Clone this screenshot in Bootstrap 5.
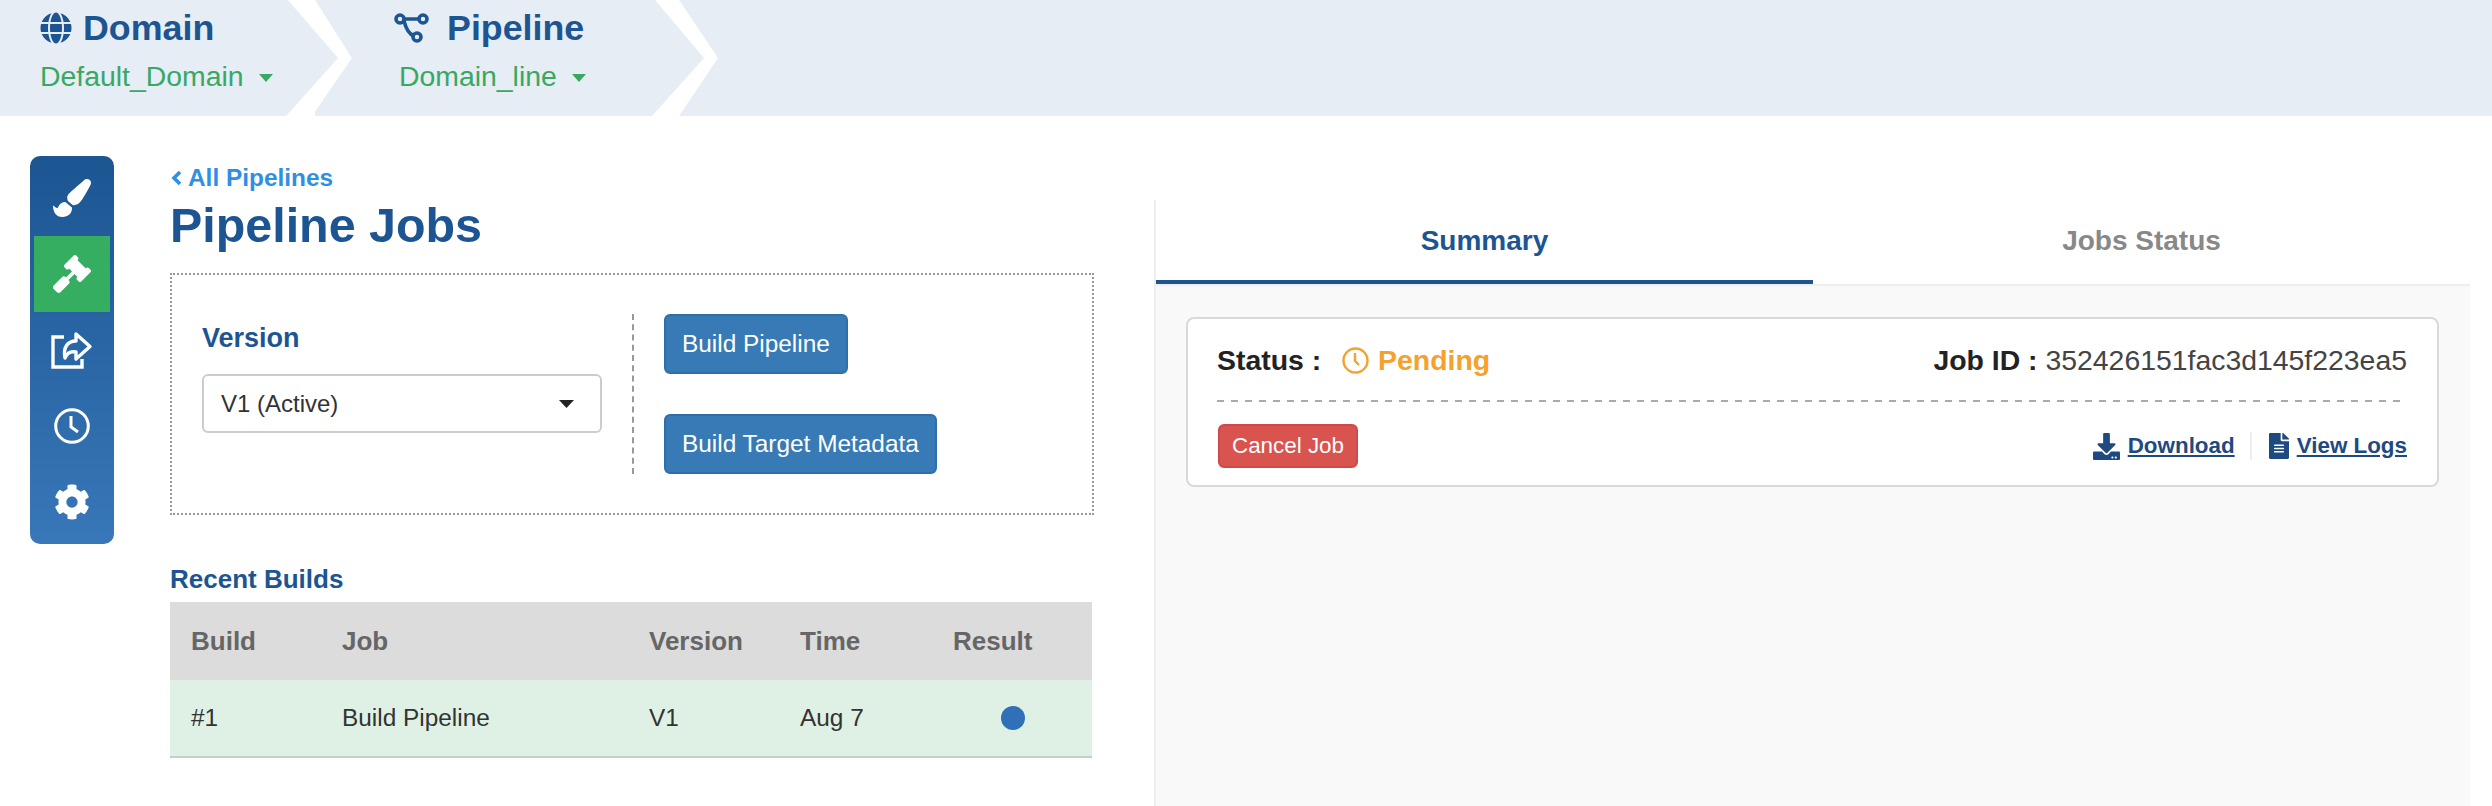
<!DOCTYPE html>
<html lang="en">
<head>
    <meta charset="UTF-8">
    <meta name="viewport" content="width=device-width, initial-scale=1.0">
    <title>Pipeline Jobs</title>
    <link rel="stylesheet" href="https://cdn.jsdelivr.net/npm/bootstrap@5.3.0/dist/css/bootstrap.min.css">
    <style>
    body {
        font-family: "Liberation Sans", Arial, sans-serif;
        font-size: 26px;
        color: #222;
        background: #fff;
        overflow: hidden;
    }

    /* top breadcrumb bar */
    .crumb-bar { height: 116px; }
    .crumb {
        background: #e6edf5;
        height: 116px;
        padding-top: 8px;
    }
    .crumb-one {
        width: 338px;
        padding-left: 40px;
        clip-path: polygon(0 0, 288px 0, 338px 58px, 286px 116px, 0 116px);
    }
    .crumb-two {
        width: 389px;
        margin-left: -23px;
        padding-left: 78px;
        clip-path: polygon(0 0, 340px 0, 389px 58px, 337px 116px, -3px 116px, 37px 58px);
    }
    .crumb-three {
        margin-left: -25px;
        clip-path: polygon(0 0, 100% 0, 100% 100%, 0 100%, 39px 58px);
    }
    .crumb-title {
        color: #1c5592;
        font-size: 35.800px;
        font-weight: 700;
        line-height: 40px;
    }
    .crumb-sub {
        display: inline-block;
        color: #38a863;
        font-size: 28.400px;
        line-height: 36px;
        margin-top: 10px;
        text-decoration: none;
    }
    .crumb-two .crumb-sub { margin-left: 6px; }
    .crumb-sub.dropdown-toggle::after {
        margin-left: 15px;
        vertical-align: 4px;
        border-top: 8px solid;
        border-left: 7px solid transparent;
        border-right: 7px solid transparent;
        border-bottom: 0;
    }
    .globe-icon { margin-right: 11px; }
    .route-icon { margin-right: 17px; }

    /* icon rail */
    .side-rail {
        width: 84px;
        height: 388px;
        margin: 40px 56px 0 30px;
        padding: 4px;
        border-radius: 10px;
        background: linear-gradient(180deg, #1c5592, #3877b8);
    }
    .rail-item {
        width: 76px;
        height: 76px;
    }
    .rail-item.active { background: #36ae62; }

    /* left column */
    .jobs-col { width: 924px; }
    .back-link {
        display: flex;
        align-items: center;
        gap: 6px;
        margin-top: 47px;
        padding-left: 1px;
        color: #2f8fe3;
        font-size: 24.400px;
        font-weight: 700;
        line-height: 30px;
        text-decoration: none;
    }
    .page-title {
        color: #1c5592;
        font-size: 48.400px;
        font-weight: 700;
        line-height: 56px;
        margin: 4px 0 20px;
    }
    .build-box {
        height: 242px;
        border: 2px dotted #999;
        padding: 39px 0 0 30px;
    }
    .version-col {
        width: 400px;
        padding-top: 6px;
    }
    .version-label {
        color: #1c5592;
        font-size: 27px;
        font-weight: 700;
        line-height: 36px;
        margin-bottom: 18px;
    }
    .version-select {
        height: 59px;
        padding: 0 50px 0 17px;
        font-size: 24px;
        color: #333;
        border: 2px solid #ccc;
        border-radius: 6px;
        background-image: url("data:image/svg+xml,%3Csvg xmlns='http://www.w3.org/2000/svg' viewBox='0 0 15 8'%3E%3Cpath fill='%23222' d='M0 0h15L7.500 8z'/%3E%3C/svg%3E");
        background-size: 15px 8px;
        background-position: right 26px center;
    }
    .build-actions {
        height: 160px;
        margin-left: 30px;
        padding-left: 30px;
        border-left: 2px dashed #999;
        gap: 40px;
    }
    .btn-build {
        height: 60px;
        padding: 0 16px;
        font-size: 24.400px;
        line-height: 56px;
        color: #fff;
        background: #377ab5;
        border: 2px solid #2f6fa8;
        border-radius: 6px;
    }
    .recent-title {
        color: #1c5592;
        font-size: 26px;
        font-weight: 700;
        line-height: 30px;
        margin: 49px 0 8px;
    }
    .builds-table {
        width: 922px;
        table-layout: fixed;
        margin: 0;
        box-shadow: 0 2px 0 #c4cfc8;
    }
    .builds-table th {
        height: 78px;
        padding: 0 0 0 21px;
        vertical-align: middle;
        font-size: 26px;
        color: #666;
        background: #dcdcdc;
        border: 0;
    }
    .builds-table td {
        height: 76px;
        padding: 0 0 0 21px;
        vertical-align: middle;
        font-size: 24.400px;
        color: #333;
        background: #dff1e5;
        border: 0;
    }
    .result-dot {
        display: block;
        width: 24px;
        height: 24px;
        margin: 0 auto;
        border-radius: 50%;
        background: #2f70b6;
        transform: translateX(-10px);
    }

    /* right panel */
    .result-panel {
        width: 1316px;
        margin: 84px 0 0 60px;
        height: 606px;
        border-left: 2px solid #eee;
        background: #f9f9f9;
    }
    .tab-row {
        height: 86px;
        background: #fff;
        border-bottom: 2px solid #eee;
    }
    .tab-row .nav-link {
        height: 84px;
        padding: 0;
        font-size: 28px;
        font-weight: 700;
        line-height: 82px;
        color: #888;
        border-bottom: 4px solid transparent;
    }
    .tab-row .nav-link.active {
        color: #1c5592;
        border-bottom-color: #1c5592;
    }
    .job-card {
        height: 170px;
        margin: 31px 31px 0 30px;
        padding: 21px 30px 0 29px;
        background: #fff;
        border: 2px solid #d9d9d9;
        border-radius: 8px;
    }
    .job-head {
        height: 40px;
        font-size: 28.400px;
        line-height: 40px;
    }
    .job-head b { color: #222; }
    .job-id { color: #444; }
    .pending {
        color: #f5a12f;
        font-weight: 700;
    }
    .status-clock { margin: 0 9px 0 21px; }
    .dash-line {
        height: 2px;
        margin: 20px 7px 22px 0;
        background: repeating-linear-gradient(90deg, #aaa 0 7px, transparent 7px 14px);
    }
    .btn-cancel {
        height: 44px;
        width: 140px;
        margin-left: 1px;
        padding: 0;
        font-size: 22.400px;
        line-height: 40px;
        color: #fff;
        background: #d9534f;
        border: 2px solid #d0494a;
        border-radius: 6px;
    }
    .job-link {
        color: #1f4a80;
        font-size: 22.400px;
        font-weight: 700;
        line-height: 30px;
    }
    .link-rule {
        width: 2px;
        height: 28px;
        margin: 0 17px 0 15px;
        background: #eee;
    }
    </style>
</head>
<body>
    <div class="crumb-bar d-flex">
        <div class="crumb crumb-one">
            <div class="crumb-title d-flex align-items-center">
                <svg width="32" height="32" viewBox="0 0 496 512" fill="#1c5592" class="globe-icon"><path d="M336.500 160C322 70.700 287.800 8 248 8s-74 62.700-88.500 152h177zM152 256c0 22.200 1.200 43.500 3.300 64h185.300c2.100-20.500 3.300-41.800 3.300-64s-1.200-43.500-3.300-64H155.300c-2.100 20.500-3.300 41.800-3.300 64zm324.700-96c-28.600-67.900-86.500-120.400-158-141.600 24.400 33.800 41.200 84.700 50 141.600h108zM177.200 18.400C105.800 39.600 47.800 92.100 19.300 160h108c8.700-56.900 25.500-107.800 49.900-141.600zM487.400 192H372.700c2.100 21 3.300 42.500 3.300 64s-1.200 43-3.300 64h114.600c5.500-20.500 8.600-41.800 8.600-64s-3.100-43.500-8.500-64zM120 256c0-21.500 1.200-43 3.300-64H8.600C3.200 212.500 0 233.800 0 256s3.200 43.500 8.600 64h114.600c-2-21-3.200-42.500-3.200-64zm39.500 96c14.500 89.300 48.700 152 88.500 152s74-62.700 88.500-152h-177zm159.300 141.600c71.400-21.200 129.400-73.700 158-141.600h-108c-8.800 56.900-25.600 107.800-50 141.600zM19.300 352c28.600 67.900 86.500 120.400 158 141.600-24.400-33.800-41.200-84.700-50-141.600h-108z"/></svg>
                Domain
            </div>
            <a href="#" class="crumb-sub dropdown-toggle">Default_Domain</a>
        </div>
        <div class="crumb crumb-two">
            <div class="crumb-title d-flex align-items-center">
                <svg width="37" height="30" viewBox="0 0 37 30" fill="none" stroke="#1c5592" stroke-width="3.600" class="route-icon"><circle cx="7" cy="6" r="4"/><circle cx="30" cy="6" r="4"/><circle cx="24" cy="24" r="4"/><path d="M11 6h15M11 8c2 8 5 13 10 15"/></svg>
                Pipeline
            </div>
            <a href="#" class="crumb-sub dropdown-toggle">Domain_line</a>
        </div>
        <div class="crumb crumb-three flex-grow-1"></div>
    </div>

    <div class="d-flex">
        <div class="side-rail flex-shrink-0">
            <div class="rail-item d-flex align-items-center justify-content-center">
                <svg width="38" height="38" viewBox="0 0 512 512" fill="#fff"><path d="M167.020 309.340c-40.120 2.580-76.530 17.860-97.190 72.300-2.350 6.210-8 9.980-14.590 9.980-11.110 0-45.460-27.670-55.250-34.350C0 439.620 37.930 512 128 512c75.860 0 128-43.770 128-120.190 0-3.110-.65-6.080-.97-9.130l-88.010-73.340zM457.890 0c-15.160 0-29.370 6.710-40.210 16.450C213.270 199.050 192 203.340 192 257.090c0 13.700 3.250 26.760 8.730 38.700l63.820 53.180c7.210 1.800 14.640 3.030 22.390 3.030 62.110 0 98.110-45.470 211.160-256.460 7.380-14.350 13.900-29.850 13.900-45.990C512 20.640 486 0 457.890 0z"/></svg>
            </div>
            <div class="rail-item active d-flex align-items-center justify-content-center">
                <svg width="38" height="38" viewBox="0 0 512 512" fill="#fff"><path d="M504.971 199.362l-22.627-22.627c-9.373-9.373-24.569-9.373-33.941 0l-5.657 5.657L329.608 69.255l5.657-5.657c9.373-9.373 9.373-24.569 0-33.941L312.638 7.029c-9.373-9.373-24.569-9.373-33.941 0L154.246 131.480c-9.373 9.373-9.373 24.569 0 33.941l22.627 22.627c9.373 9.373 24.569 9.373 33.941 0l5.657-5.657 39.598 39.598-81.040 81.040-5.657-5.657c-12.497-12.497-32.758-12.497-45.255 0L9.373 412.118c-12.497 12.497-12.497 32.758 0 45.255l45.255 45.255c12.497 12.497 32.758 12.497 45.255 0l114.745-114.745c12.497-12.497 12.497-32.758 0-45.255l-5.657-5.657 81.040-81.040 39.598 39.598-5.657 5.657c-9.373 9.373-9.373 24.569 0 33.941l22.627 22.627c9.373 9.373 24.569 9.373 33.941 0l124.451-124.451c9.372-9.372 9.372-24.568 0-33.941z"/></svg>
            </div>
            <div class="rail-item d-flex align-items-center justify-content-center">
                <svg width="42" height="38" viewBox="0 0 42 38" fill="none" stroke="#fff" stroke-width="3.400"><path d="M13 6H2v30h29v-8"/><path d="M14 27c-2-10 2-17 11-17V3l14 12.500L25 28v-7c-5-1-9 1-11 6z" stroke-linejoin="round"/></svg>
            </div>
            <div class="rail-item d-flex align-items-center justify-content-center">
                <svg width="36" height="36" viewBox="0 0 36 36" fill="none" stroke="#fff" stroke-width="3"><circle cx="18" cy="18" r="16.300"/><path d="M17 8v11l7 5"/></svg>
            </div>
            <div class="rail-item d-flex align-items-center justify-content-center">
                <svg width="36" height="36" viewBox="0 0 512 512" fill="#fff"><path d="M487.400 315.700l-42.600-24.600c4.300-23.200 4.300-47 0-70.200l42.600-24.600c4.900-2.800 7.100-8.600 5.500-14-11.100-35.600-30-67.800-54.700-94.600-3.800-4.100-10-5.100-14.800-2.300L380.800 110c-17.900-15.400-38.500-27.300-60.800-35.100V25.800c0-5.600-3.900-10.500-9.400-11.700-36.700-8.200-74.300-7.800-109.200 0-5.500 1.200-9.400 6.100-9.400 11.700V75c-22.200 7.900-42.800 19.800-60.800 35.100L88.700 85.500c-4.900-2.800-11-1.900-14.800 2.300-24.700 26.700-43.600 58.900-54.700 94.600-1.700 5.400.6 11.200 5.500 14L67.300 221c-4.300 23.200-4.300 47 0 70.200l-42.600 24.600c-4.900 2.800-7.100 8.600-5.500 14 11.100 35.600 30 67.800 54.700 94.600 3.800 4.100 10 5.100 14.800 2.300l42.600-24.600c17.900 15.400 38.500 27.300 60.800 35.100v49.200c0 5.600 3.900 10.500 9.400 11.700 36.700 8.200 74.300 7.800 109.200 0 5.500-1.200 9.400-6.100 9.400-11.700v-49.200c22.200-7.900 42.800-19.800 60.800-35.100l42.600 24.600c4.900 2.800 11 1.900 14.800-2.300 24.700-26.700 43.600-58.900 54.700-94.600 1.500-5.500-.7-11.300-5.600-14.100zM256 336c-44.100 0-80-35.900-80-80s35.900-80 80-80 80 35.900 80 80-35.900 80-80 80z"/></svg>
            </div>
        </div>

        <div class="jobs-col flex-shrink-0">
            <a href="#" class="back-link"><svg width="11" height="16" viewBox="0 0 11 16" fill="none" stroke="#2f8fe3" stroke-width="3.600"><path d="M9 2L3 8l6 6"/></svg>All Pipelines</a>
            <h1 class="page-title">Pipeline Jobs</h1>

            <div class="build-box d-flex">
                <div class="version-col">
                    <div class="version-label">Version</div>
                    <select class="form-select version-select">
                        <option>V1 (Active)</option>
                    </select>
                </div>
                <div class="build-actions d-flex flex-column align-items-start">
                    <button class="btn btn-build">Build Pipeline</button>
                    <button class="btn btn-build">Build Target Metadata</button>
                </div>
            </div>

            <div class="recent-title">Recent Builds</div>
            <table class="table builds-table">
                <colgroup>
                    <col style="width:151px"><col style="width:307px"><col style="width:151px"><col style="width:153px"><col style="width:160px">
                </colgroup>
                <thead>
                    <tr><th>Build</th><th>Job</th><th>Version</th><th>Time</th><th>Result</th></tr>
                </thead>
                <tbody>
                    <tr><td>#1</td><td>Build Pipeline</td><td>V1</td><td>Aug 7</td><td><span class="result-dot"></span></td></tr>
                </tbody>
            </table>
        </div>

        <div class="result-panel flex-shrink-0">
            <ul class="nav nav-justified tab-row">
                <li class="nav-item"><a class="nav-link active" href="#">Summary</a></li>
                <li class="nav-item"><a class="nav-link" href="#">Jobs Status</a></li>
            </ul>
            <div class="job-card">
                <div class="job-head d-flex justify-content-between">
                    <div class="d-flex align-items-center">
                        <b>Status :</b>
                        <svg width="27" height="27" viewBox="0 0 27 27" fill="none" stroke="#f5a12f" stroke-width="2.400" class="status-clock"><circle cx="13.500" cy="13.500" r="12"/><path d="M13 6v8l4 4"/></svg>
                        <span class="pending">Pending</span>
                    </div>
                    <div class="job-id"><b>Job ID :</b> 352426151fac3d145f223ea5</div>
                </div>
                <div class="dash-line"></div>
                <div class="d-flex justify-content-between align-items-center">
                    <button class="btn btn-cancel">Cancel Job</button>
                    <div class="d-flex align-items-center">
                        <svg width="27" height="27" viewBox="0 0 512 512" fill="#1f4a80" class="me-2"><path d="M216 0h80c13.300 0 24 10.700 24 24v168h87.700c17.800 0 26.700 21.500 14.100 34.100L269.700 378.300c-7.500 7.500-19.800 7.500-27.300 0L90.100 226.100c-12.600-12.600-3.700-34.100 14.100-34.100H192V24c0-13.300 10.700-24 24-24zm296 376v112c0 13.300-10.700 24-24 24H24c-13.300 0-24-10.700-24-24V376c0-13.300 10.700-24 24-24h146.700l49 49c20.100 20.100 52.500 20.100 72.600 0l49-49H488c13.300 0 24 10.700 24 24zm-124 88c0-11-9-20-20-20s-20 9-20 20 9 20 20 20 20-9 20-20zm64 0c0-11-9-20-20-20s-20 9-20 20 9 20 20 20 20-9 20-20z"/></svg>
                        <a href="#" class="job-link">Download</a>
                        <span class="link-rule"></span>
                        <svg width="20" height="26" viewBox="0 0 384 512" fill="#1f4a80" class="me-2" preserveAspectRatio="none"><path d="M224 136V0H24C10.700 0 0 10.700 0 24v464c0 13.300 10.700 24 24 24h336c13.300 0 24-10.700 24-24V160H248c-13.200 0-24-10.800-24-24zm64 236c0 6.600-5.400 12-12 12H108c-6.600 0-12-5.400-12-12v-8c0-6.600 5.400-12 12-12h168c6.600 0 12 5.400 12 12v8zm0-64c0 6.600-5.400 12-12 12H108c-6.600 0-12-5.400-12-12v-8c0-6.600 5.400-12 12-12h168c6.600 0 12 5.400 12 12v8zm0-72v8c0 6.600-5.400 12-12 12H108c-6.600 0-12-5.400-12-12v-8c0-6.600 5.400-12 12-12h168c6.600 0 12 5.400 12 12zm96-114.100v6.100H256V0h6.100c6.400 0 12.500 2.500 17 7l97.900 98c4.500 4.500 7 10.600 7 16.900z"/></svg>
                        <a href="#" class="job-link">View Logs</a>
                    </div>
                </div>
            </div>
        </div>
    </div>

    <script src="https://cdn.jsdelivr.net/npm/bootstrap@5.3.0/dist/js/bootstrap.bundle.min.js"></script>
</body>
</html>
